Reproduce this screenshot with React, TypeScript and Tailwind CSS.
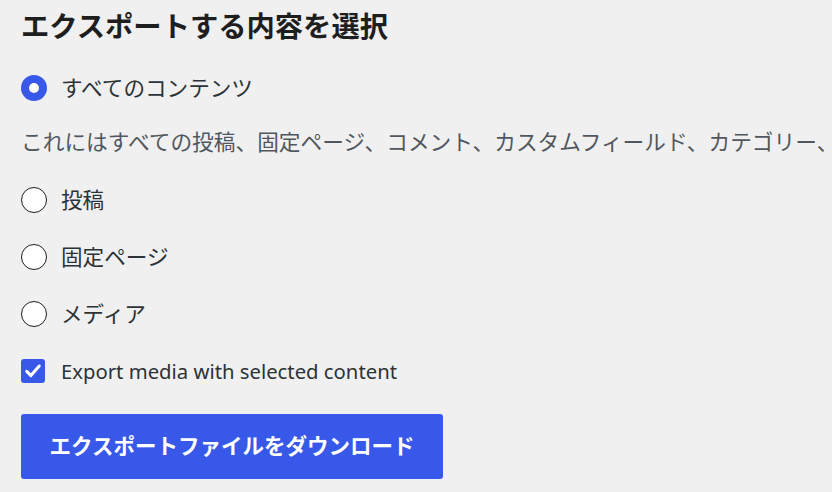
import React from 'react';

const font = { fontFamily: '"Noto Sans", "Noto Sans CJK JP", sans-serif' };

const Radio: React.FC<{ checked?: boolean; label: string; className?: string }> = ({ checked, label, className }) => (
  <label className={`flex h-[30px] items-center ${className ?? ''}`}>
    {checked ? (
      <span className="flex h-[26px] w-[26px] items-center justify-center rounded-full bg-[#3858e9]">
        <span className="h-[10px] w-[10px] rounded-full bg-white" />
      </span>
    ) : (
      <span className="h-[26px] w-[26px] rounded-full border-[1.3px] border-[#1e1e1e] bg-white" />
    )}
    <span className="ml-[14px] text-[21.6px] leading-[30px] text-[#2c3338]">{label}</span>
  </label>
);

export default function App() {
  return (
    <div className="min-h-[492px] w-[832px] overflow-hidden bg-[#f0f0f0] pl-[21px] pt-[8px]" style={font}>
      <h2 className="h-[36px] text-[28.3px] font-bold leading-[36px] text-[#1e1e1e]">エクスポートする内容を選択</h2>

      <Radio checked label="すべてのコンテンツ" className="mt-[29px]" />

      <p className="mt-[24px] h-[30px] overflow-hidden whitespace-nowrap text-[21.7px] leading-[30px] text-[#50575e]">
        これにはすべての投稿、固定ページ、コメント、カスタムフィールド、カテゴリー、タグ、ナビゲーションメニュー、カスタム投稿が含まれます。
      </p>

      <Radio label="投稿" className="mt-[28px]" />
      <Radio label="固定ページ" className="mt-[27px]" />
      <Radio label="メディア" className="mt-[27px]" />

      <label className="mt-[27px] flex h-[30px] items-center">
        <span className="flex h-[24px] w-[24px] items-center justify-center rounded-[3px] bg-[#3858e9]">
          <svg width="20" height="20" viewBox="0 0 24 24" fill="none">
            <path d="M4.5 12.5l5 5 10-11.5" stroke="white" strokeWidth="3.6" strokeLinecap="round" strokeLinejoin="round" />
          </svg>
        </span>
        <span className="ml-[16px] text-[20.3px] leading-[30px] text-[#2c3338]">Export media with selected content</span>
      </label>

      <button className="mt-[28px] flex h-[65px] w-[422px] items-center justify-center rounded-[3px] bg-[#3858e9] text-[21.5px] font-semibold text-white">
        エクスポートファイルをダウンロード
      </button>
    </div>
  );
}
